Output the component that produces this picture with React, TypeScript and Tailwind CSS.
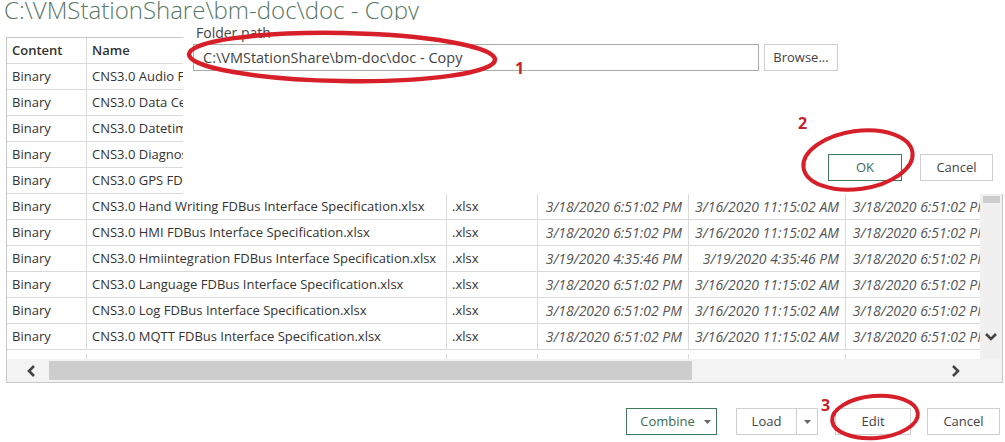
import React from "react";

const cols = [80, 360, 91, 151, 157, 150];

const rows = [
  ["Binary", "CNS3.0 Audio FDBus Interface Specification.xlsx", ".xlsx", "3/18/2020 6:51:02 PM", "3/16/2020 11:15:02 AM", "3/18/2020 6:51:02 PM"],
  ["Binary", "CNS3.0 Data Center FDBus Interface Specification.xlsx", ".xlsx", "3/18/2020 6:51:02 PM", "3/16/2020 11:15:02 AM", "3/18/2020 6:51:02 PM"],
  ["Binary", "CNS3.0 Datetime FDBus Interface Specification.xlsx", ".xlsx", "3/18/2020 6:51:02 PM", "3/16/2020 11:15:02 AM", "3/18/2020 6:51:02 PM"],
  ["Binary", "CNS3.0 Diagnose FDBus Interface Specification.xlsx", ".xlsx", "3/18/2020 6:51:02 PM", "3/16/2020 11:15:02 AM", "3/18/2020 6:51:02 PM"],
  ["Binary", "CNS3.0 GPS FDBus Interface Specification.xlsx", ".xlsx", "3/18/2020 6:51:02 PM", "3/16/2020 11:15:02 AM", "3/18/2020 6:51:02 PM"],
  ["Binary", "CNS3.0 Hand Writing FDBus Interface Specification.xlsx", ".xlsx", "3/18/2020 6:51:02 PM", "3/16/2020 11:15:02 AM", "3/18/2020 6:51:02 PM"],
  ["Binary", "CNS3.0 HMI FDBus Interface Specification.xlsx", ".xlsx", "3/18/2020 6:51:02 PM", "3/16/2020 11:15:02 AM", "3/18/2020 6:51:02 PM"],
  ["Binary", "CNS3.0 Hmiintegration FDBus Interface Specification.xlsx", ".xlsx", "3/19/2020 4:35:46 PM", "3/19/2020 4:35:46 PM", "3/18/2020 6:51:02 PM"],
  ["Binary", "CNS3.0 Language FDBus Interface Specification.xlsx", ".xlsx", "3/18/2020 6:51:02 PM", "3/16/2020 11:15:02 AM", "3/18/2020 6:51:02 PM"],
  ["Binary", "CNS3.0 Log FDBus Interface Specification.xlsx", ".xlsx", "3/18/2020 6:51:02 PM", "3/16/2020 11:15:02 AM", "3/18/2020 6:51:02 PM"],
  ["Binary", "CNS3.0 MQTT FDBus Interface Specification.xlsx", ".xlsx", "3/18/2020 6:51:02 PM", "3/16/2020 11:15:02 AM", "3/18/2020 6:51:02 PM"],
  ["Binary", "CNS3.0 Navigation FDBus Interface Specification.xlsx", ".xlsx", "3/18/2020 6:51:02 PM", "3/16/2020 11:15:02 AM", "3/18/2020 6:51:02 PM"],
];

function Chevron({ dir }: { dir: "left" | "right" | "down" }) {
  const pts =
    dir === "left" ? "7,1 2,6 7,11" : dir === "right" ? "2,1 7,6 2,11" : "1,2 6,7 11,2";
  const w = dir === "down" ? 12 : 9;
  const h = dir === "down" ? 9 : 12;
  return (
    <svg width={w} height={h} viewBox={`0 0 ${w} ${h}`}>
      <polyline points={pts} fill="none" stroke="#444" strokeWidth="2.6" />
    </svg>
  );
}

function Caret() {
  return (
    <svg width="7" height="4" viewBox="0 0 7 4">
      <polygon points="0,0 7,0 3.5,4" fill="#666" />
    </svg>
  );
}

function Btn({ children, w, green }: { children: React.ReactNode; w: string; green?: boolean }) {
  return (
    <div
      className={`${w} flex h-[27px] items-center justify-center border text-[13px] ${
        green ? "border-[#3f7a5c] text-[#3d6b55]" : "border-[#cfcfcf] text-[#444]"
      } bg-white`}
    >
      {children}
    </div>
  );
}

export default function App() {
  return (
    <div className="relative h-[442px] w-[1005px] overflow-hidden bg-white font-['Open_Sans',sans-serif] text-[#333]">
      <div className="h-[21px] overflow-hidden pl-[4px]">
        <div className="-mt-[2px] whitespace-nowrap text-[24px] leading-[24px] font-light text-[#5a7868]">
          C:\VMStationShare\bm-doc\doc - Copy
        </div>
      </div>

      <div className="ml-[6px] mt-[16px] flex h-[346px] w-[997px] flex-col border border-[#c8c8c8]">
        <div className="flex h-[321px]">
          <div className="w-[973px] overflow-hidden">
            <div className="flex h-[26px] border-b border-[#dadada] text-[13px] font-semibold">
              {["Content", "Name", "Extension", "Date accessed", "Date modified", "Date created"].map((h, i) => (
                <div
                  key={h}
                  className="flex shrink-0 items-center border-r border-[#dadada] pl-[5px] whitespace-nowrap"
                  style={{ width: cols[i] }}
                >
                  {h}
                </div>
              ))}
            </div>
            {rows.map((r, ri) => (
              <div
                key={ri}
                className={`flex h-[26px] border-b border-[#dadada] text-[13px] ${
                  ri === rows.length - 1 ? "pt-[4px]" : ""
                }`}
              >
                {r.map((c, i) => (
                  <div
                    key={i}
                    className={`flex shrink-0 items-center overflow-hidden whitespace-nowrap border-r border-[#dadada] ${
                      i >= 3 ? "justify-end pr-[6px] text-[14px] italic text-[#555]" : "pl-[5px]"
                    }`}
                    style={{ width: cols[i] }}
                  >
                    {c}
                  </div>
                ))}
              </div>
            ))}
          </div>
          <div className="flex w-[22px] flex-col items-center bg-[#f0f0f0] pt-[158px]">
            <div className="h-[7px] w-[17px] bg-[#cdcdcd]" />
            <div className="flex-1" />
            <div className="mb-[18px]">
              <Chevron dir="down" />
            </div>
          </div>
        </div>
        <div className="flex h-[23px] items-center bg-[#f3f3f3]">
          <div className="flex w-[42px] justify-center pl-[6px]">
            <Chevron dir="left" />
          </div>
          <div className="h-[19px] w-[643px] bg-[#cdcdcd]" />
          <div className="flex flex-1 justify-end pr-[42px]">
            <Chevron dir="right" />
          </div>
        </div>
      </div>

      <div className="mr-[5px] mt-[25px] flex justify-end">
        <Btn w="w-[91px]" green>
          <span className="ml-[8px]">Combine</span>
          <span className="ml-[9px]">
            <Caret />
          </span>
        </Btn>
        <div className="ml-[19px] flex">
          <Btn w="w-[61px]">Load</Btn>
          <div className="-ml-px">
            <Btn w="w-[22px]">
              <Caret />
            </Btn>
          </div>
        </div>
        <div className="ml-[17px]">
          <Btn w="w-[76px]">Edit</Btn>
        </div>
        <div className="ml-[16px]">
          <Btn w="w-[73px]">Cancel</Btn>
        </div>
      </div>

      {/* Folder path dialog */}
      <div className="absolute left-[183px] right-0 top-[20px] flex h-[174px] flex-col bg-white pl-[10px] pr-[12px] pt-[3px]">
        <div className="pl-[3px] text-[14px] leading-[20px] text-[#444]">Folder path</div>
        <div className="mt-[1px] flex">
          <div className="flex h-[27px] w-[566px] items-center border border-[#ababab] pl-[9px] text-[14.5px] text-[#444]">
            C:\VMStationShare\bm-doc\doc - Copy
          </div>
          <div className="ml-[5px]">
            <Btn w="w-[74px]">Browse...</Btn>
          </div>
        </div>
        <div className="mt-[83px] flex justify-end">
          <Btn w="w-[74px]" green>
            OK
          </Btn>
          <div className="ml-[18px]">
            <Btn w="w-[73px]">Cancel</Btn>
          </div>
        </div>
      </div>

      {/* annotations */}
      <svg className="pointer-events-none absolute inset-0" width="1005" height="442">
        <ellipse cx="342" cy="57" rx="153" ry="24" fill="none" stroke="#d71f2a" strokeWidth="4.5" transform="rotate(1 342 57)" />
        <ellipse cx="858" cy="160" rx="55" ry="29" fill="none" stroke="#d71f2a" strokeWidth="4" transform="rotate(-8 858 160)" />
        <ellipse cx="875" cy="417" rx="43" ry="21" fill="none" stroke="#d71f2a" strokeWidth="4" transform="rotate(-5 875 417)" />
      </svg>
      <span className="absolute left-[515px] top-[56px] text-[16px] font-bold text-[#c8202a]">1</span>
      <span className="absolute left-[798px] top-[111px] text-[16px] font-bold text-[#c8202a]">2</span>
      <span className="absolute left-[821px] top-[393px] text-[16px] font-bold text-[#c8202a]">3</span>
    </div>
  );
}
